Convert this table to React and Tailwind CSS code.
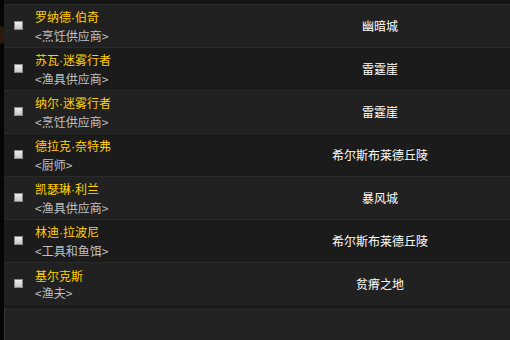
import React from "react";

const rows = [
  { name: "罗纳德·伯奇", sub: "<烹饪供应商>", loc: "幽暗城" },
  { name: "苏瓦·迷雾行者", sub: "<渔具供应商>", loc: "雷霆崖" },
  { name: "纳尔·迷雾行者", sub: "<烹饪供应商>", loc: "雷霆崖" },
  { name: "德拉克·奈特弗", sub: "<厨师>", loc: "希尔斯布莱德丘陵" },
  { name: "凯瑟琳·利兰", sub: "<渔具供应商>", loc: "暴风城" },
  { name: "林迪·拉波尼", sub: "<工具和鱼饵>", loc: "希尔斯布莱德丘陵" },
  { name: "基尔克斯", sub: "<渔夫>", loc: "贫瘠之地" },
];

function Name({ text }) {
  const parts = text.split("·");
  return (
    <span className="text-[#ffd100]">
      {parts.map((p, i) => (
        <React.Fragment key={i}>
          {i > 0 && (
            <span style={{ fontFamily: '"Liberation Sans", sans-serif' }}>·</span>
          )}
          {p}
        </React.Fragment>
      ))}
    </span>
  );
}

export default function App() {
  return (
    <div
      className="w-[510px] h-[340px] flex bg-[#050505] overflow-hidden text-[12px]"
      style={{ fontFamily: '"Noto Sans CJK SC", "Noto Sans", sans-serif' }}
    >
      <div className="w-[4px] flex flex-col">
        <div className="h-[26px]" />
        <div className="h-[18px] bg-[#2a1a0a] rounded-r-[3px]" />
      </div>
      <div className="flex-1 flex flex-col">
        <div className="h-[4px] bg-[#151515]" />
        {rows.map((r, i) => (
          <div
            key={i}
            className={`h-[43px] border-t border-[#2a2a2a] flex items-center ${
              i % 2 === 0 ? "bg-[#212121]" : "bg-[#1b1b1b]"
            }`}
          >
            <div className="ml-[10px] mb-[2px] w-[9px] h-[9px] border border-[#8a8a8a] bg-gradient-to-b from-[#eeeeee] to-[#c8c8c8]" />
            <div className="ml-[12px] w-[215px] flex flex-col leading-[17px]">
              <Name text={r.name} />
              <span className="text-[#c0c0c0]">{r.sub}</span>
            </div>
            <div className="flex-1 text-center text-white">{r.loc}</div>
          </div>
        ))}
        <div className="h-[3px] bg-[#191919]" />
        <div className="flex-1 bg-[#232323] border-l border-[#3a3a3a]" />
      </div>
    </div>
  );
}
